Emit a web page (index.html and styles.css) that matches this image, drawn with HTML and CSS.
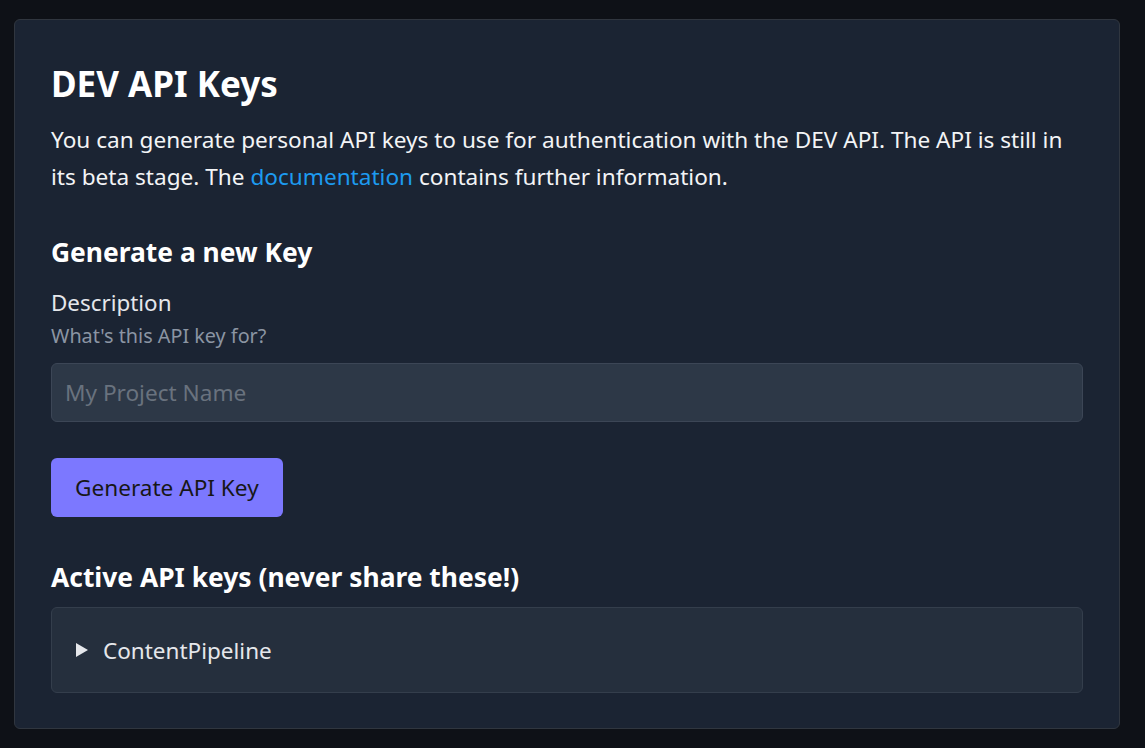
FILE: index.html
```html
<!DOCTYPE html>
<html lang="en">
<head>
<meta charset="utf-8">
<title>DEV API Keys</title>
<link rel="stylesheet" href="styles.css">
</head>
<body>
<section class="card">
  <h1 class="title">DEV API Keys</h1>
  <p class="intro">You can generate personal API keys to use for authentication with the DEV API. The API is still in its beta stage. The <a href="#" class="link">documentation</a> contains further information.</p>
  <h2 class="subtitle">Generate a new Key</h2>
  <div class="field">
    <label class="label" for="desc">Description</label>
    <span class="hint">What's this API key for?</span>
    <input id="desc" class="input" type="text" placeholder="My Project Name">
  </div>
  <button class="btn" type="button">Generate API Key</button>
  <h2 class="subtitle subtitle-active">Active API keys (never share these!)</h2>
  <div class="keybox">
    <div class="key-summary"><span class="caret"></span><span class="key-name">ContentPipeline</span></div>
  </div>
</section>
</body>
</html>
```

FILE: styles.css
```css
* { box-sizing: border-box; }
html, body { margin: 0; padding: 0; }
body {
  background: #0e1117;
  font-family: "Noto Sans", "Open Sans", sans-serif;
  color: #f5f6f7;
  padding: 19px 25px 19px 14px;
  min-height: 748px;
}
.card {
  background: #1b2433;
  border: 1px solid #30363f;
  border-radius: 6px;
  padding: 42px 36px 35px 36px;
}
.title {
  margin: 0;
  font-size: 35px;
  line-height: 44px;
  font-weight: 700;
  color: #ffffff;
}
.intro {
  margin: 15px 0 0 0;
  font-size: 22.6px;
  line-height: 37px;
  color: #f3f4f6;
}
.link { color: #1d9bf0; text-decoration: none; }
.subtitle {
  margin: 40px 0 0 0;
  font-size: 26.4px;
  line-height: 34px;
  font-weight: 700;
  color: #ffffff;
}
.field {
  display: flex;
  flex-direction: column;
  margin-top: 19px;
}
.label {
  font-size: 22.4px;
  line-height: 30px;
  color: #e5e7eb;
}
.hint {
  font-size: 19.8px;
  line-height: 26px;
  color: #8b95a3;
  margin-top: 5px;
}
.input {
  margin-top: 14px;
  height: 59px;
  width: 100%;
  background: #2d3847;
  border: 1px solid #3c4656;
  border-radius: 6px;
  padding: 0 13px;
  font-family: inherit;
  font-size: 22.6px;
  color: #e5e7eb;
}
.input::placeholder { color: #69727e; }
.btn {
  margin-top: 36px;
  display: block;
  height: 59px;
  padding: 0 24px;
  background: #7c78ff;
  border: none;
  border-radius: 6px;
  font-family: inherit;
  font-size: 22.6px;
  color: #171717;
}
.subtitle-active { margin-top: 43px; }
.keybox {
  margin-top: 13px;
  background: #252f3d;
  border: 1px solid #343e4c;
  border-radius: 6px;
  height: 86px;
  display: flex;
  align-items: center;
  padding: 0 24px;
}
.key-summary {
  display: flex;
  align-items: center;
  gap: 15px;
}
.caret {
  width: 0; height: 0;
  border-left: 12px solid #e5e7eb;
  border-top: 7px solid transparent;
  border-bottom: 7px solid transparent;
}
.key-name {
  font-size: 22.5px;
  color: #e5e7eb;
}
```
